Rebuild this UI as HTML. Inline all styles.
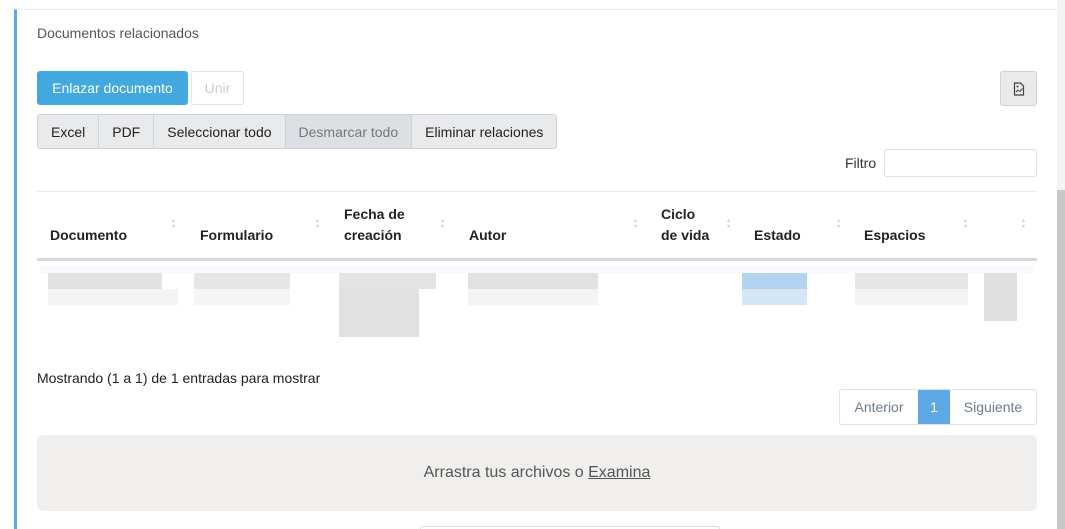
<!DOCTYPE html>
<html style="width:1065px;height:529px;overflow:hidden"><head><style>
*{box-sizing:border-box;margin:0;padding:0}
body{width:1065px;height:529px;overflow:hidden;background:#fff;font-family:"Liberation Sans",sans-serif;position:relative;color:#212529}
.card{position:absolute;left:14px;top:9px;width:1043px;height:520px;border-top:1px solid #eee;border-left:3px solid #5fa8e6}
.abs{position:absolute}
.t{font-size:14px}
.btn{position:absolute;height:34px;font-size:14px;display:flex;align-items:center;justify-content:center;border-radius:3px}
.grp{position:absolute;left:37px;top:114px;height:35px;display:flex;border:1px solid #cfd2d6;border-radius:3px;overflow:hidden;background:#e9eaeb}
.grp div{padding:0 13px;display:flex;align-items:center;font-size:14px;border-right:1px solid #cfd2d6;color:#222}
.grp div:last-child{border-right:none}
.th{position:absolute;font-size:14px;font-weight:bold;color:#222;line-height:21px}
.sort{position:absolute;width:4px;font-size:6px;color:#ccc;line-height:6px}
.blk{position:absolute}
</style></head><body>
<div class="card"></div>
<div class="abs t" style="left:37px;top:25px;color:#555">Documentos relacionados</div>
<div class="btn" style="left:37px;top:71px;width:151px;background:#41a9dd;color:#fff">Enlazar documento</div>
<div class="btn" style="left:191px;top:71px;width:53px;border:1px solid #e3e3e3;color:#ccc">Unir</div>
<div class="btn" style="left:1000px;top:71px;width:37px;height:35px;background:#e9eaeb;border:1px solid #cfd2d6">
<svg width="12" height="14" viewBox="0 0 12 14"><path d="M1.5 1h6l3 3v9h-9z" fill="none" stroke="#444" stroke-width="1.2"/><circle cx="4.5" cy="4.5" r="1" fill="#444"/><path d="M3 10l2-2 2 1.5 2.5-3" fill="none" stroke="#444" stroke-width="1"/></svg></div>
<div class="grp"><div>Excel</div><div>PDF</div><div>Seleccionar todo</div><div style="background:#dcdfe3;color:#777">Desmarcar todo</div><div>Eliminar relaciones</div></div>
<div class="abs t" style="left:845px;top:155px;color:#333">Filtro</div>
<div class="abs" style="left:884px;top:149px;width:153px;height:28px;border:1px solid #dee2e6;border-radius:3px"></div>
<div class="abs" style="left:37px;top:191px;width:1000px;height:1px;background:#e9ecef"></div>
<div class="th" style="left:50px;top:225px">Documento</div>
<div class="th" style="left:200px;top:225px">Formulario</div>
<div class="th" style="left:344px;top:204px">Fecha de<br>creación</div>
<div class="th" style="left:469px;top:225px">Autor</div>
<div class="th" style="left:661px;top:204px">Ciclo<br>de vida</div>
<div class="th" style="left:754px;top:225px">Estado</div>
<div class="th" style="left:864px;top:225px">Espacios</div>
<div class="sort" style="left:172px;top:218px">▴<br>▾</div>
<div class="sort" style="left:316px;top:218px">▴<br>▾</div>
<div class="sort" style="left:441px;top:218px">▴<br>▾</div>
<div class="sort" style="left:634px;top:218px">▴<br>▾</div>
<div class="sort" style="left:727px;top:218px">▴<br>▾</div>
<div class="sort" style="left:837px;top:218px">▴<br>▾</div>
<div class="sort" style="left:964px;top:218px">▴<br>▾</div>
<div class="sort" style="left:1022px;top:218px">▴<br>▾</div>
<div class="abs" style="left:37px;top:258px;width:1000px;height:3px;background:#d5d8dc"></div>
<div class="abs" style="left:40px;top:266px;width:993px;height:7px;background:#f8f9fa"></div>
<div class="blk" style="left:48px;top:273px;width:114px;height:16px;background:#e2e2e2"></div>
<div class="blk" style="left:48px;top:289px;width:130px;height:16px;background:#f3f3f3"></div>
<div class="blk" style="left:194px;top:273px;width:96px;height:16px;background:#e6e6e6"></div>
<div class="blk" style="left:194px;top:289px;width:96px;height:16px;background:#f5f5f5"></div>
<div class="blk" style="left:339px;top:273px;width:97px;height:16px;background:#e4e4e4"></div>
<div class="blk" style="left:339px;top:289px;width:80px;height:48px;background:#e2e2e2"></div>
<div class="blk" style="left:468px;top:273px;width:130px;height:16px;background:#e2e2e2"></div>
<div class="blk" style="left:468px;top:289px;width:130px;height:16px;background:#f3f3f3"></div>
<div class="blk" style="left:742px;top:273px;width:65px;height:16px;background:#b3d3f0"></div>
<div class="blk" style="left:742px;top:289px;width:65px;height:16px;background:#d4e6f6"></div>
<div class="blk" style="left:855px;top:273px;width:113px;height:16px;background:#e6e6e6"></div>
<div class="blk" style="left:855px;top:289px;width:113px;height:16px;background:#f4f4f4"></div>
<div class="blk" style="left:984px;top:273px;width:33px;height:48px;background:#e0e0e0"></div>
<div class="abs t" style="left:37px;top:370px;color:#222">Mostrando (1 a 1) de 1 entradas para mostrar</div>
<div class="abs" style="left:839px;top:389px;width:198px;height:36px;border:1px solid #dee2e6;border-radius:3px;display:flex;font-size:14px;color:#6c7a89;overflow:hidden">
<div style="width:78px;display:flex;align-items:center;justify-content:center">Anterior</div>
<div style="width:32px;background:#5fa8e6;color:#fff;display:flex;align-items:center;justify-content:center">1</div>
<div style="flex:1;display:flex;align-items:center;justify-content:center">Siguiente</div></div>
<div class="abs" style="left:37px;top:435px;width:1000px;height:76px;background:#f0efed;border-radius:6px;display:flex;align-items:center;justify-content:center;font-size:16px;color:#555">Arrastra tus archivos o&nbsp;<u>Examina</u></div>
<div class="abs" style="left:420px;top:526px;width:300px;height:3px;border:1px solid #ddd;border-bottom:none;border-radius:3px 3px 0 0"></div>
<div class="abs" style="left:1057px;top:0;width:8px;height:529px;background:#f4f4f4"></div>
<div class="abs" style="left:1057px;top:190px;width:8px;height:339px;background:#c8c8c8"></div>
</body></html>
